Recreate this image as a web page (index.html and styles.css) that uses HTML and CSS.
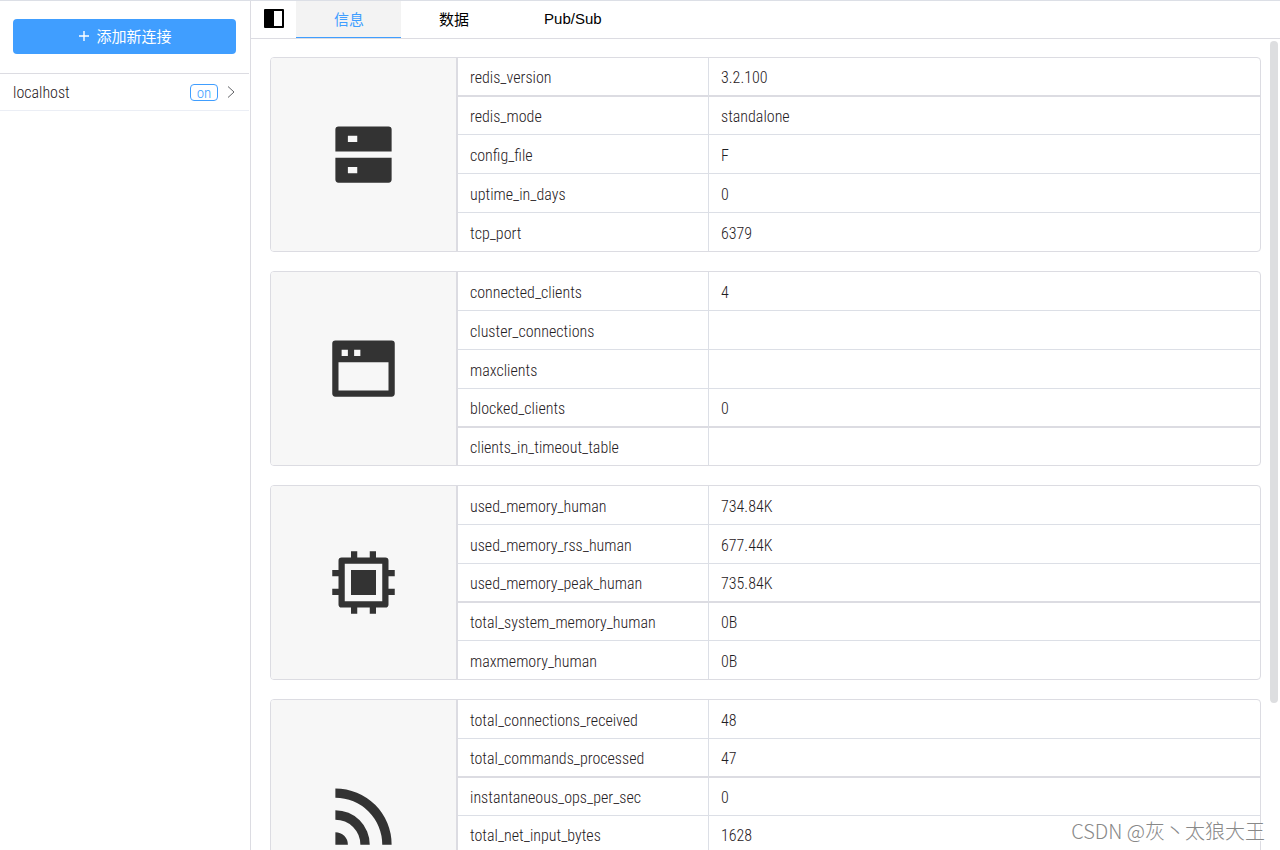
FILE: index.html
```html
<!DOCTYPE html>
<html lang="zh-CN">
<head>
<meta charset="utf-8">
<title>Redis</title>
<link rel="stylesheet" href="styles.css">
</head>
<body>
<div class="app">
  <aside class="sidebar">
    <div class="sidebar-head">
      <button class="add-button" type="button">
        <svg class="plus" viewBox="0 0 10 10" aria-hidden="true"><path d="M5 0V10M0 5H10"/></svg>
        <span>添加新连接</span>
      </button>
    </div>
    <a class="connection" href="#">
      <span class="connection-name">localhost</span>
      <span class="badge">on</span>
      <svg class="chevron" viewBox="0 0 8 12" aria-hidden="true"><path d="M1 0.5L7 6L1 11.5"/></svg>
    </a>
  </aside>
  <main class="main">
    <nav class="tabs">
      <button class="toggle" type="button" aria-label="Sidebar">
        <svg viewBox="0 0 20 19" aria-hidden="true"><rect width="20" height="19" rx="1"/><rect class="pane" x="10" y="2" width="8" height="15"/></svg>
      </button>
      <button class="tab tab-active" type="button">信息</button>
      <button class="tab" type="button">数据</button>
      <button class="tab" type="button">Pub/Sub</button>
    </nav>
    <div class="content">
      <section class="card">
        <div class="card-icon">
          <svg viewBox="0 0 24 24" aria-hidden="true"><path fill-rule="evenodd" d="M4 3H20Q21 3 21 4V11H3V4Q3 3 4 3ZM3 13H21V20Q21 21 20 21H4Q3 21 3 20ZM7 6V8H10V6ZM7 16V18H10V16Z"/></svg>
        </div>
        <table>
          <tr class="firm"><th scope="row">redis_version</th><td>3.2.100</td></tr>
          <tr><th scope="row">redis_mode</th><td>standalone</td></tr>
          <tr><th scope="row">config_file</th><td>F</td></tr>
          <tr><th scope="row">uptime_in_days</th><td>0</td></tr>
          <tr><th scope="row">tcp_port</th><td>6379</td></tr>
        </table>
      </section>
      <section class="card">
        <div class="card-icon">
          <svg viewBox="0 0 24 24" aria-hidden="true"><path fill-rule="evenodd" d="M3 3H21Q22 3 22 4V20Q22 21 21 21H3Q2 21 2 20V4Q2 3 3 3ZM4 10V19H20V10ZM5 6V8H7V6ZM9 6V8H11V6Z"/></svg>
        </div>
        <table>
          <tr><th scope="row">connected_clients</th><td>4</td></tr>
          <tr><th scope="row">cluster_connections</th><td></td></tr>
          <tr><th scope="row">maxclients</th><td></td></tr>
          <tr class="firm"><th scope="row">blocked_clients</th><td>0</td></tr>
          <tr><th scope="row">clients_in_timeout_table</th><td></td></tr>
        </table>
      </section>
      <section class="card">
        <div class="card-icon">
          <svg viewBox="0 0 24 24" aria-hidden="true"><path fill-rule="evenodd" d="M8 2H10V4H14V2H16V4H19Q20 4 20 5V8H22V10H20V14H22V16H20V19Q20 20 19 20H16V22H14V20H10V22H8V20H5Q4 20 4 19V16H2V14H4V10H2V8H4V5Q4 4 5 4H8ZM6 6V18H18V6Z"/><path d="M8 8H16V16H8Z"/></svg>
        </div>
        <table>
          <tr><th scope="row">used_memory_human</th><td>734.84K</td></tr>
          <tr><th scope="row">used_memory_rss_human</th><td>677.44K</td></tr>
          <tr class="firm"><th scope="row">used_memory_peak_human</th><td>735.84K</td></tr>
          <tr><th scope="row">total_system_memory_human</th><td>0B</td></tr>
          <tr><th scope="row">maxmemory_human</th><td>0B</td></tr>
        </table>
      </section>
      <section class="card card-tall">
        <div class="card-icon">
          <svg viewBox="0 0 24 24" aria-hidden="true"><path d="M3 3A18 18 0 0 1 21 21H18A15 15 0 0 0 3 6ZM3 10A11 11 0 0 1 14 21H11A8 8 0 0 0 3 13ZM3 17A4 4 0 0 1 7 21H3Z"/></svg>
        </div>
        <table>
          <tr><th scope="row">total_connections_received</th><td>48</td></tr>
          <tr class="firm"><th scope="row">total_commands_processed</th><td>47</td></tr>
          <tr><th scope="row">instantaneous_ops_per_sec</th><td>0</td></tr>
          <tr><th scope="row">total_net_input_bytes</th><td>1628</td></tr>
        </table>
      </section>
    </div>
    <div class="scroll-thumb"></div>
  </main>
  <div class="watermark">CSDN @灰丶太狼大王</div>
</div>
</body>
</html>
```
FILE: styles.css
```css
* {
  box-sizing: border-box;
}

body {
  margin: 0;
  background: #fff;
  color: #303133;
  font-family: "Liberation Sans", "Noto Sans CJK SC", sans-serif;
  font-size: 15px;
}

button {
  margin: 0;
  padding: 0;
  border: 0;
  background: none;
  color: inherit;
  font: inherit;
  cursor: pointer;
}

.app {
  position: relative;
  display: flex;
  height: 100vh;
  overflow: hidden;
  border-top: 1px solid #dcdfe6;
}

.sidebar {
  flex: none;
  width: 251px;
  padding-right: 1px;
  border-right: 1px solid #dcdce2;
}

.sidebar-head {
  padding: 18px 13px 19px;
  border-bottom: 1px solid #dcdce2;
}

.add-button {
  display: flex;
  align-items: center;
  justify-content: center;
  gap: 7px;
  width: 100%;
  height: 35px;
  padding: 0 0 2px 2px;
  border-radius: 4px;
  background: #409eff;
  color: #fff;
}

.plus {
  width: 10px;
  height: 10px;
  fill: none;
  stroke: #fff;
  stroke-width: 1.4;
}

.connection {
  display: flex;
  align-items: center;
  height: 37px;
  padding: 0 14px 0 13px;
  border-bottom: 1px solid #ebeef5;
  color: #1f2023;
  font-family: "Roboto Condensed", "Liberation Sans Narrow", "Liberation Sans", sans-serif;
  font-size: 16px;
  font-weight: 300;
  text-decoration: none;
}

.connection-name {
  flex: 1;
}

.badge {
  width: 28px;
  height: 17px;
  border: 1px solid #409eff;
  border-radius: 4px;
  color: #409eff;
  font-size: 15px;
  line-height: 17px;
  text-align: center;
}

.chevron {
  width: 8px;
  height: 12px;
  margin-left: 9px;
  fill: none;
  stroke: #606266;
}

.main {
  position: relative;
  display: flex;
  flex: 1;
  flex-direction: column;
  min-width: 0;
}

.tabs {
  display: flex;
  flex: none;
  height: 38px;
  border-bottom: 1px solid #dcdce2;
  color: #000;
}

.toggle {
  display: flex;
  align-items: center;
  padding: 0 12px 2px 13px;
}

.toggle svg {
  width: 20px;
  height: 19px;
}

.pane {
  fill: #fff;
}

.tab {
  padding: 0 37px 2px 38px;
  border-bottom: 1px solid transparent;
}

.tab-active {
  border-bottom-color: #409eff;
  background: #f3f3f3;
  color: #409eff;
}

.content {
  display: flex;
  flex: 1;
  flex-direction: column;
  gap: 19px;
  min-height: 0;
  padding: 18px 19px;
  overflow: hidden;
}

.card {
  display: flex;
  flex: none;
  align-items: flex-start;
  overflow: hidden;
  border: 1px solid #dcdce2;
  border-radius: 4px;
}

.card-tall {
  min-height: 234px;
}

.card-icon {
  display: flex;
  flex: none;
  align-items: center;
  align-self: stretch;
  justify-content: center;
  width: 187px;
  border-right: 2px solid #dcdce2;
  background: #f7f7f7;
}

.card-icon svg {
  width: 75px;
  height: 75px;
  fill: #333;
}

table {
  flex: 1;
  border-collapse: separate;
  border-spacing: 0;
  table-layout: fixed;
  color: #1f2023;
  font-family: "Roboto Condensed", "Liberation Sans Narrow", "Liberation Sans", sans-serif;
  font-size: 16px;
}

th,
td {
  height: 39px;
  padding: 2px 12px 0;
  border-bottom: 1px solid #dcdfe6;
  font-weight: 300;
  text-align: left;
}

th {
  width: 251px;
  border-right: 1px solid #dcdfe6;
}

.firm > * {
  border-bottom: 2px solid #dcdce2;
}

.firm + tr > *,
tr:last-child > * {
  height: 38px;
}

.firm + tr:last-child > * {
  height: 37px;
}

.card:not(.card-tall) tr:last-child > * {
  border-bottom: 0;
}

.scroll-thumb {
  position: absolute;
  top: 40px;
  right: 2px;
  width: 8px;
  height: 78%;
  border-radius: 4px;
  background: #dddee0;
}

.watermark {
  position: absolute;
  right: 15px;
  bottom: 5px;
  color: #888;
  font-family: "Noto Sans CJK SC", sans-serif;
  font-size: 20px;
  font-weight: 300;
  line-height: 28px;
  text-shadow: 1px 1px 1px #fff;
}
```
